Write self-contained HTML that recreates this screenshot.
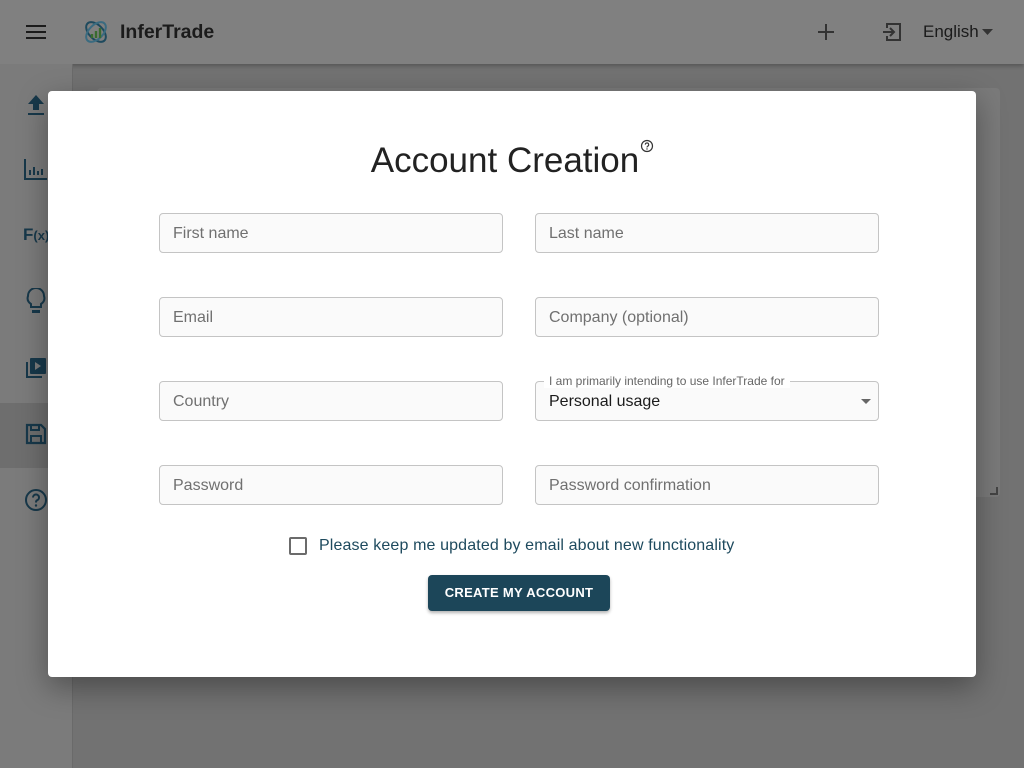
<!DOCTYPE html>
<html><head><meta charset="utf-8"><style>
*{box-sizing:border-box;margin:0;padding:0}
body{width:1024px;height:768px;overflow:hidden;position:relative;background:#727272;font-family:"Liberation Sans",Arial,sans-serif}
.hdr{position:absolute;left:0;top:0;width:1024px;height:64px;background:#808080;box-shadow:0 2px 4px rgba(0,0,0,.25)}
.side{position:absolute;left:0;top:64px;width:73px;height:704px;background:#7b7b7b;border-right:1px solid #6a6a6a}
.sel{position:absolute;left:0;top:339px;width:73px;height:65px;background:#6e6e6e}
.card{position:absolute;left:97px;top:88px;width:903px;height:409px;background:#7a7a7a;border-radius:4px}
.ic{position:absolute}
.modal{position:absolute;left:48px;top:91px;width:928px;height:586px;background:#fff;border-radius:4px;box-shadow:0 10px 30px rgba(0,0,0,.35)}
h1{position:absolute;left:0;width:100%;top:50px;text-align:center;font-weight:400;font-size:35px;color:#222}
.f{position:absolute;width:344px;height:40px;border:1px solid #c4c4c4;border-radius:4px;background:#fafafa;font-size:16px;color:#707070;padding:11px 13px 0}
.chk{position:absolute;left:241px;top:446px;width:18px;height:18px;border:2px solid #6b6b6b;border-radius:2px}
.lbl{position:absolute;left:271px;top:446px;font-size:16px;letter-spacing:.13px;color:#1e4a5e}
.btn{position:absolute;left:380px;top:484px;width:182px;height:36px;background:#1c4659;border-radius:4px;color:#fff;font-size:13px;font-weight:700;letter-spacing:.3px;text-align:center;line-height:36px;box-shadow:0 2px 3px rgba(0,0,0,.3)}
</style></head><body>
<div class="hdr">
<svg class="ic" style="left:25px;top:22px" width="22" height="20" viewBox="0 0 22 20"><path d="M1 4h20M1 10h20M1 16h20" stroke="#1b1b1b" stroke-width="2"/></svg>
<svg class="ic" style="left:82px;top:18px" width="28" height="28" viewBox="0 0 28 28"><ellipse cx="14" cy="14" rx="12" ry="7" transform="rotate(45 14 14)" fill="none" stroke="#1e4a5e" stroke-width="2"/><ellipse cx="14" cy="14" rx="12" ry="7" transform="rotate(-45 14 14)" fill="none" stroke="#3a6b80" stroke-width="2"/><path d="M10 20v-4M14 20v-7M18 20v-10" stroke="#3a6b30" stroke-width="2.4"/></svg>
<div style="position:absolute;left:120px;top:21px;font-size:19.5px;font-weight:700;color:#1b1b1b">InferTrade</div>
<svg class="ic" style="left:817px;top:23px" width="18" height="18"><path d="M9 1v16M1 9h16" stroke="#333" stroke-width="2"/></svg>
<svg class="ic" style="left:882px;top:22px" width="20" height="20" viewBox="0 0 20 20"><path d="M5 6V2h13v16H5v-4" fill="none" stroke="#333" stroke-width="2"/><path d="M1 10h10M8 6l4 4-4 4" fill="none" stroke="#333" stroke-width="2"/></svg>
<div style="position:absolute;left:923px;top:22px;font-size:17px;color:#1b1b1b">English</div>
<svg class="ic" style="left:982px;top:29px" width="12" height="6"><path d="M0 0h11L5.5 6z" fill="#333"/></svg>
</div>
<div class="side"><div class="sel"></div>
<svg class="ic" style="left:26px;top:30px" width="20" height="22"><path d="M10 1l8 9h-5v6H7v-6H2z M2 19h16v2H2z" fill="#17384a"/></svg>
<svg class="ic" style="left:24px;top:94px" width="24" height="22"><path d="M1 1v20h22M6 17v-5M10 17v-8M14 17v-4M18 17v-6" fill="none" stroke="#17384a" stroke-width="2"/></svg>
<div style="position:absolute;left:23px;top:161px;font-size:17px;font-weight:700;color:#17384a">F<span style="font-size:13px">(x)</span></div>
<svg class="ic" style="left:26px;top:224px" width="20" height="28"><path d="M5 19v-3C2 14 1 11 2 8a8 8 0 0 1 16 0c1 3 0 6-3 8v3z" fill="none" stroke="#17384a" stroke-width="2"/><rect x="6" y="22" width="8" height="3" fill="#17384a"/></svg>
<svg class="ic" style="left:25px;top:293px" width="22" height="22"><path d="M2 5v15h15" fill="none" stroke="#17384a" stroke-width="2"/><rect x="5" y="1" width="16" height="16" rx="1" fill="#17384a"/><path d="M10 5v8l6-4z" fill="#7b7b7b"/></svg>
<svg class="ic" style="left:25px;top:359px" width="22" height="22"><path d="M2 2h14l4 4v14H2z" fill="none" stroke="#17384a" stroke-width="2.2"/><path d="M6 2v5h8V2M6 20v-7h10v7" fill="none" stroke="#17384a" stroke-width="2"/></svg>
<svg class="ic" style="left:24px;top:424px" width="24" height="24"><circle cx="12" cy="12" r="10" fill="none" stroke="#17384a" stroke-width="2"/><path d="M9 9.5a3 3 0 1 1 4 2.8c-1 .5-1 1-1 2.2" fill="none" stroke="#17384a" stroke-width="2"/><circle cx="12" cy="17.5" r="1.2" fill="#17384a"/></svg>
</div>
<div class="card"></div>
<svg class="ic" style="left:990px;top:487px" width="8" height="8"><path d="M7 0v7H0" fill="none" stroke="#444" stroke-width="2"/></svg>
<div class="modal">
<h1>Account Creation<svg style="position:relative;top:-19px;left:1px" width="14" height="14" viewBox="0 0 14 14"><circle cx="7" cy="7" r="5.5" fill="none" stroke="#333" stroke-width="1.2"/><path d="M5.3 5.6a1.7 1.7 0 1 1 2.3 1.6c-.5.3-.6.6-.6 1.3" fill="none" stroke="#333" stroke-width="1.1"/><circle cx="7" cy="10" r=".7" fill="#333"/></svg></h1>
<div class="f" style="left:111px;top:122px">First name</div>
<div class="f" style="left:487px;top:122px">Last name</div>
<div class="f" style="left:111px;top:206px">Email</div>
<div class="f" style="left:487px;top:206px">Company (optional)</div>
<div class="f" style="left:111px;top:290px">Country</div>
<div class="f" style="left:487px;top:290px;color:#1b1b1b;padding-top:11px">Personal usage
<span style="position:absolute;left:8px;top:-8px;background:#fff;padding:0 5px;font-size:12px;color:#666;line-height:14px">I am primarily intending to use InferTrade for</span>
<svg style="position:absolute;right:6px;top:17px" width="11" height="6"><path d="M0 0h10L5 5z" fill="#666"/></svg></div>
<div class="f" style="left:111px;top:374px">Password</div>
<div class="f" style="left:487px;top:374px">Password confirmation</div>
<div class="chk"></div>
<div class="lbl">Please keep me updated by email about new functionality</div>
<div class="btn">CREATE MY ACCOUNT</div>
</div>
</body></html>
